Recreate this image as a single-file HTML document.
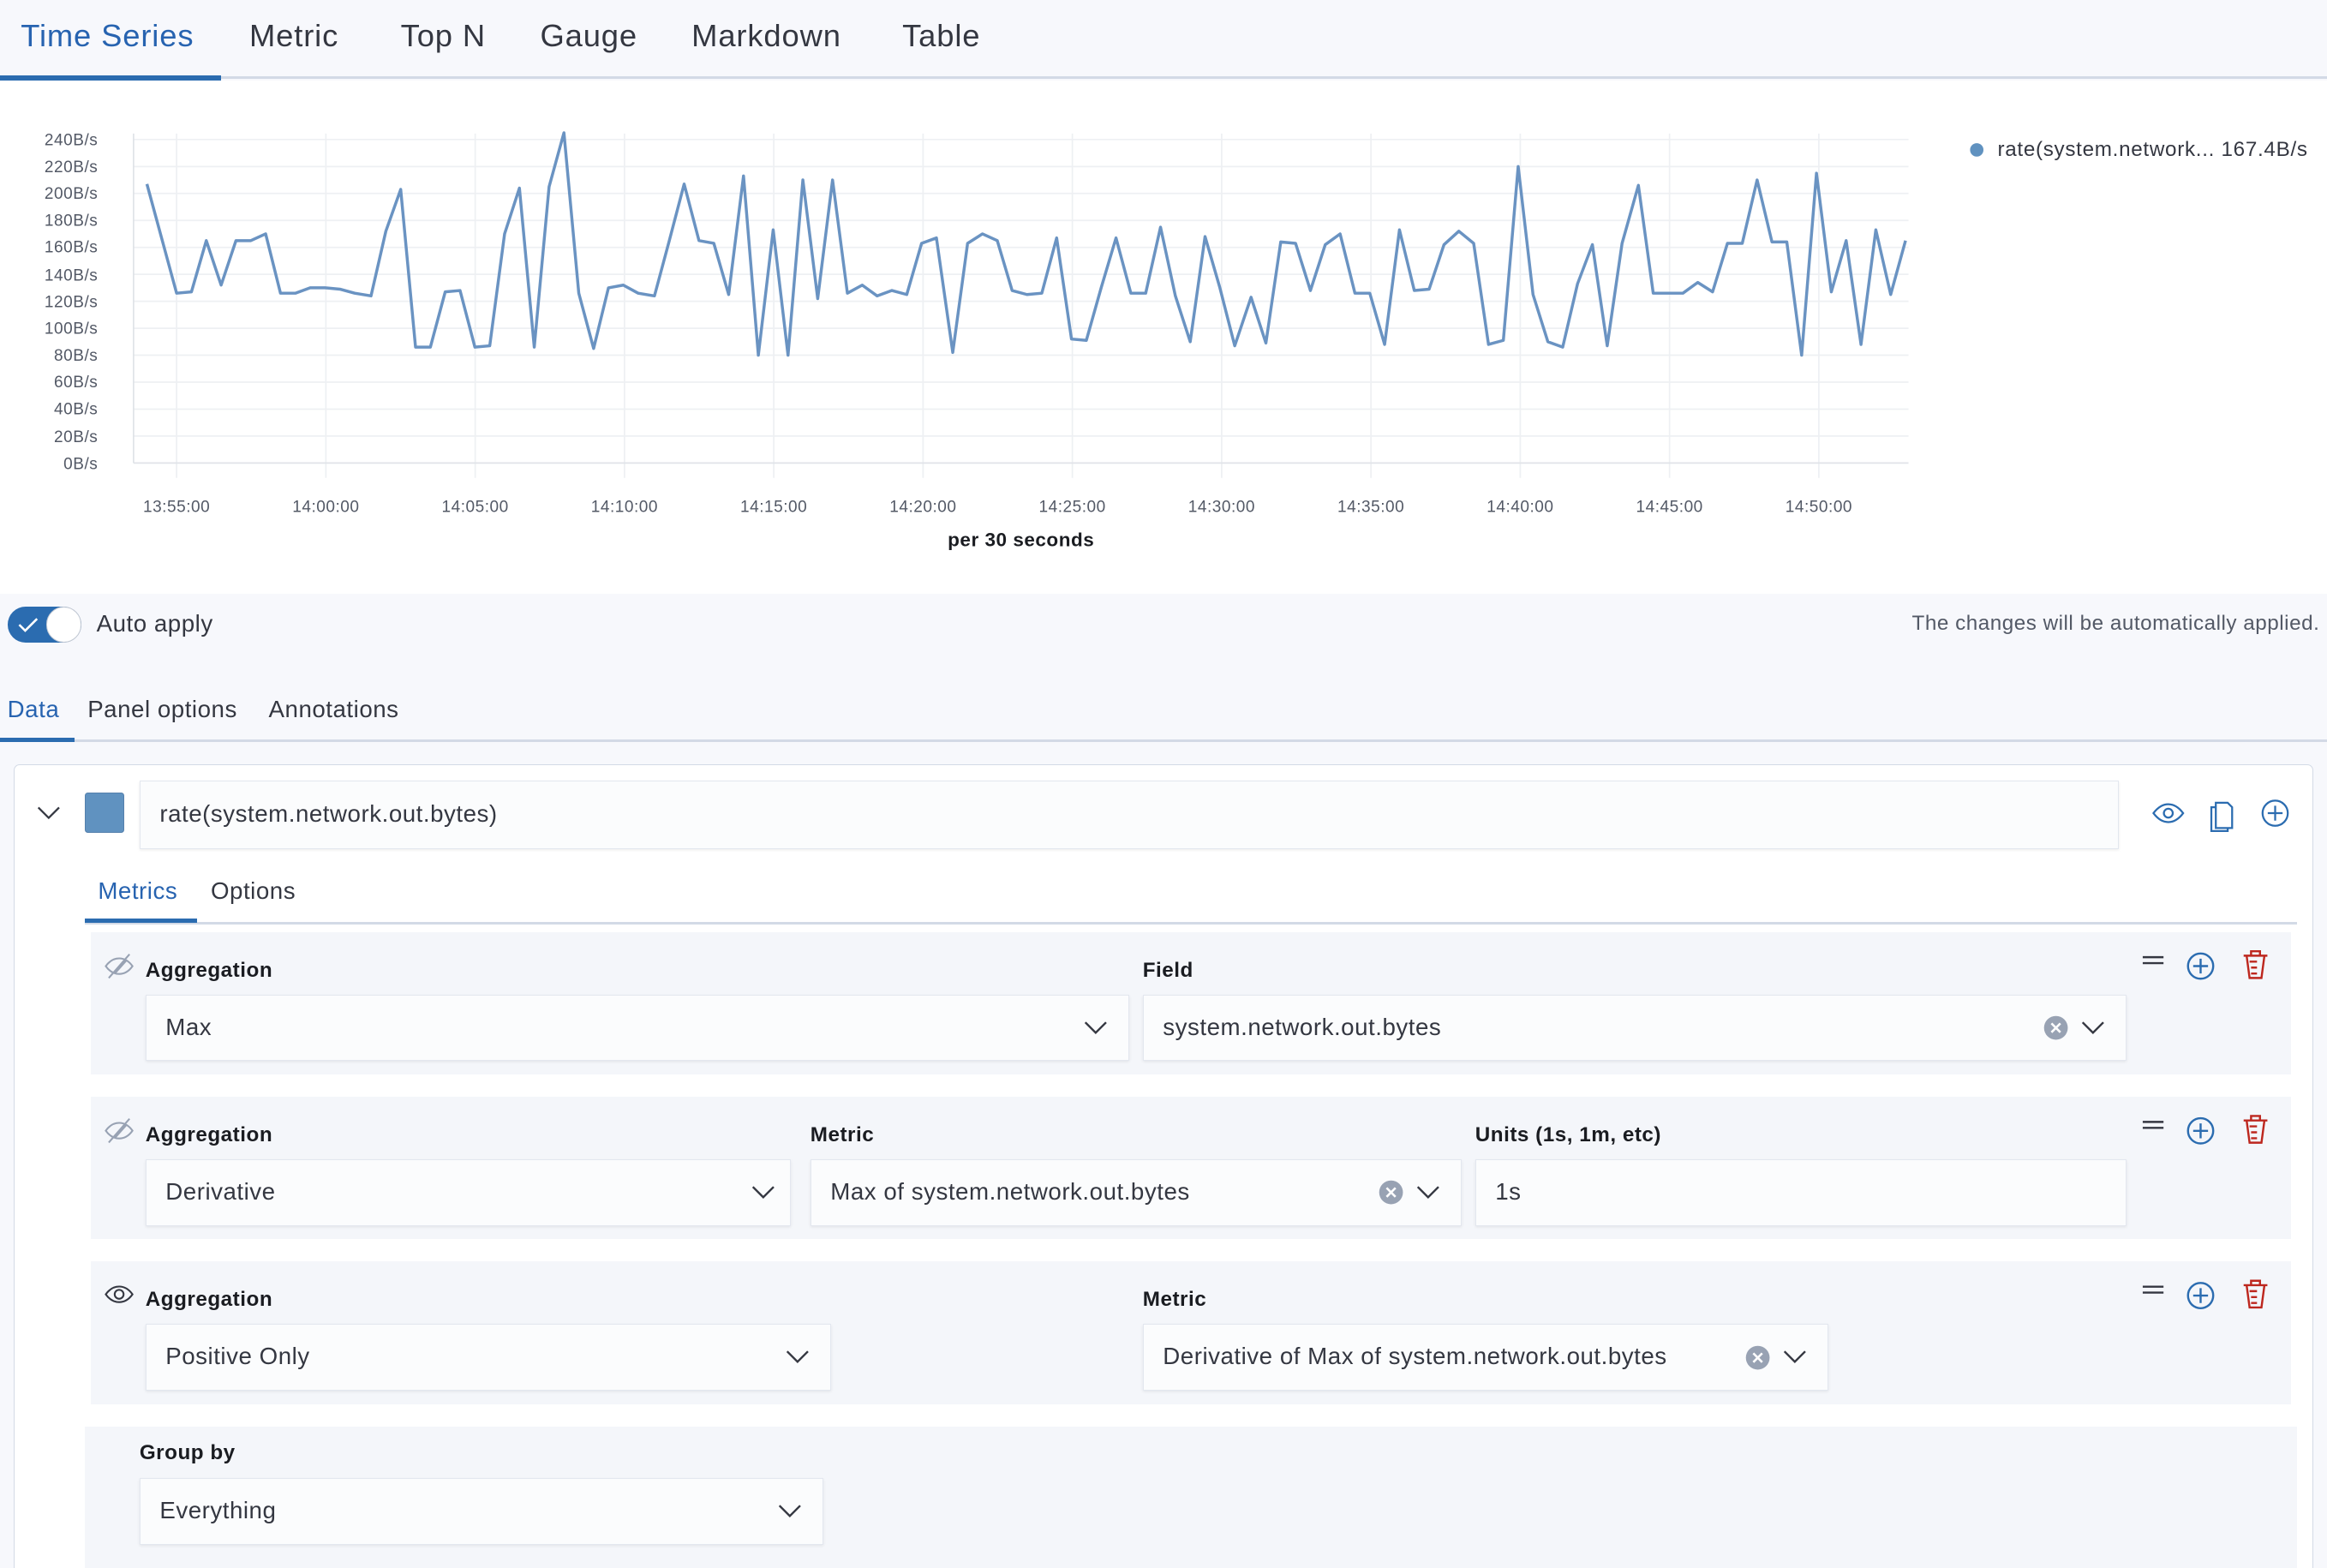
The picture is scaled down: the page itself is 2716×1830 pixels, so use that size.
<!DOCTYPE html>
<html><head><meta charset="utf-8"><style>
*{box-sizing:border-box;margin:0;padding:0}
html,body{width:2716px;height:1830px;overflow:hidden;background:#f7f8fc}
#r{zoom:1.73214;position:relative;width:1568px;height:1057px;font-family:"Liberation Sans",sans-serif;color:#343741;letter-spacing:0.3px}
.a{position:absolute}
.tab{position:absolute;top:12px;font-size:21px;color:#343741;letter-spacing:0.5px}
.sel{position:absolute;height:45px;background:#fbfcfd;border:1px solid #e3e7ef;box-shadow:0 1px 2px rgba(0,0,0,.08);font-size:16px;line-height:43px;padding-left:13px;color:#343741}
.lbl{position:absolute;font-size:14px;font-weight:bold;color:#1a1c21}
.row{position:absolute;background:#f4f6fa}
.chev{position:absolute;top:15px;width:16px;height:12px}
</style></head><body><div id="r">
<div class="a" style="left:0;top:0;width:1568px;height:53px;background:#f7f8fc;border-bottom:2px solid #d3dae6"></div>
<div class="a" style="left:0;top:51px;width:149px;height:3px;background:#2b6cb0"></div>
<div class="tab" style="left:14px;color:#2763b0">Time Series</div>
<div class="tab" style="left:168px">Metric</div>
<div class="tab" style="left:270px">Top N</div>
<div class="tab" style="left:364px">Gauge</div>
<div class="tab" style="left:466px">Markdown</div>
<div class="tab" style="left:608px">Table</div>
<div class="a" style="left:0;top:54px;width:1568px;height:346px;background:#fff"></div>
<svg class="a" style="left:0;top:0" width="1568" height="400" font-family="Liberation Sans" font-size="11" fill="#535966">
<g stroke="#eef0f3" stroke-width="1">
<line x1="90" x2="1286" y1="94" y2="94"/><line x1="90" x2="1286" y1="112.2" y2="112.2"/><line x1="90" x2="1286" y1="130.3" y2="130.3"/><line x1="90" x2="1286" y1="148.5" y2="148.5"/><line x1="90" x2="1286" y1="166.7" y2="166.7"/><line x1="90" x2="1286" y1="184.8" y2="184.8"/><line x1="90" x2="1286" y1="203" y2="203"/><line x1="90" x2="1286" y1="221.2" y2="221.2"/><line x1="90" x2="1286" y1="239.3" y2="239.3"/><line x1="90" x2="1286" y1="257.5" y2="257.5"/><line x1="90" x2="1286" y1="275.7" y2="275.7"/><line x1="90" x2="1286" y1="293.8" y2="293.8"/>
<line y1="90" y2="322" x1="119" x2="119"/><line y1="90" y2="322" x1="219.6" x2="219.6"/><line y1="90" y2="322" x1="320.2" x2="320.2"/><line y1="90" y2="322" x1="420.8" x2="420.8"/><line y1="90" y2="322" x1="521.4" x2="521.4"/><line y1="90" y2="322" x1="622" x2="622"/><line y1="90" y2="322" x1="722.6" x2="722.6"/><line y1="90" y2="322" x1="823.2" x2="823.2"/><line y1="90" y2="322" x1="923.8" x2="923.8"/><line y1="90" y2="322" x1="1024.4" x2="1024.4"/><line y1="90" y2="322" x1="1125" x2="1125"/><line y1="90" y2="322" x1="1225.6" x2="1225.6"/>
</g>
<line x1="90" x2="90" y1="90" y2="312" stroke="#e0e3e8"/><line x1="90" x2="1286" y1="312" y2="312" stroke="#e0e3e8"/>
<g text-anchor="end"><text x="66" y="98">240B/s</text><text x="66" y="116">220B/s</text><text x="66" y="134">200B/s</text><text x="66" y="152">180B/s</text><text x="66" y="170">160B/s</text><text x="66" y="189">140B/s</text><text x="66" y="207">120B/s</text><text x="66" y="225">100B/s</text><text x="66" y="243">80B/s</text><text x="66" y="261">60B/s</text><text x="66" y="279">40B/s</text><text x="66" y="298">20B/s</text><text x="66" y="316">0B/s</text></g>
<g text-anchor="middle"><text x="119" y="345">13:55:00</text><text x="219.6" y="345">14:00:00</text><text x="320.2" y="345">14:05:00</text><text x="420.8" y="345">14:10:00</text><text x="521.4" y="345">14:15:00</text><text x="622" y="345">14:20:00</text><text x="722.6" y="345">14:25:00</text><text x="823.2" y="345">14:30:00</text><text x="923.8" y="345">14:35:00</text><text x="1024.4" y="345">14:40:00</text><text x="1125" y="345">14:45:00</text><text x="1225.6" y="345">14:50:00</text>
<text x="688" y="368" font-size="13" font-weight="bold" fill="#1a1c21">per 30 seconds</text></g>
<g transform="translate(0,312) scale(1,-0.9083)"><polyline fill="none" stroke="#6a93c2" stroke-width="2" vector-effect="non-scaling-stroke" stroke-linejoin="round" points="99,207 119,126 129,127 139,165 149,132 159,165 169,165 179,170 189,126 199,126 209,130 219,130 229,129 239,126 250,124 260,172 270,203 280,86 290,86 300,127 310,128 320,86 330,87 340,170 350,204 360,86 370,205 380,245 390,126 400,85 410,130 420,132 430,126 441,124 451,165 461,207 471,165 481,163 491,125 501,213 511,80 521,173 531,80 541,210 551,122 561,210 571,126 581,132 591,124 601,128 611,125 621,163 631,167 642,82 652,163 662,170 672,165 682,128 692,125 702,126 712,167 722,92 732,91 742,130 752,167 762,126 772,126 782,175 792,124 802,90 812,168 822,130 832,87 843,123 853,89 863,164 873,163 883,128 893,162 903,170 913,126 923,126 933,88 943,173 953,128 963,129 973,162 983,172 993,163 1003,88 1013,91 1023,220 1033,125 1043,90 1053,86 1063,133 1073,162 1083,87 1093,163 1104,206 1114,126 1124,126 1134,126 1144,134 1154,127 1164,163 1174,163 1184,210 1194,164 1204,164 1214,80 1224,215 1234,127 1244,165 1254,88 1264,173 1274,125 1284,165"/></g>
<circle cx="1332" cy="101" r="4.5" fill="#6092c0"/>
<text x="1346" y="105" font-size="14" fill="#343741" letter-spacing="0.4">rate(system.network... 167.4B/s</text>
</svg>
<div class="a" style="left:5px;top:409px;width:50px;height:24px;border-radius:12px;background:#2b6cb0"></div>
<svg class="a" style="left:11px;top:414px" width="16" height="14"><path d="M2 7l4 4 8-8" fill="none" stroke="#fff" stroke-width="1.5"/></svg>
<div class="a" style="left:31px;top:409px;width:24px;height:24px;border-radius:12px;background:#fff;border:1px solid #c3c9d3"></div>
<div class="a" style="left:65px;top:411px;font-size:16px;color:#343741">Auto apply</div>
<div class="a" style="right:5px;top:412px;font-size:14px;color:#535966">The changes will be automatically applied.</div>
<div class="a" style="left:0;top:498px;width:1568px;height:2px;background:#d3dae6"></div>
<div class="a" style="left:0;top:497px;width:50px;height:3px;background:#2b6cb0"></div>
<div class="a" style="left:5px;top:469px;font-size:16px;color:#2763b0">Data</div>
<div class="a" style="left:59px;top:469px;font-size:16px">Panel options</div>
<div class="a" style="left:181px;top:469px;font-size:16px">Annotations</div>
<div class="a" style="left:9px;top:515px;width:1550px;height:560px;background:#fff;border:1px solid #d3dae6;border-radius:4px"></div>
<svg class="a" style="left:25px;top:542px" width="16" height="12"><path d="M1 2l7 7 7-7" fill="none" stroke="#343741" stroke-width="1.3"/></svg>
<div class="a" style="left:57px;top:534px;width:27px;height:27px;background:#6092c0;border:1px solid #5580ac;border-radius:2px"></div>
<div class="sel" style="left:94px;top:526px;width:1334px;height:46px;line-height:44px">rate(system.network.out.bytes)</div>
<svg class="a" style="left:1449px;top:537px" width="100" height="24" fill="none" stroke="#2b6cb0" stroke-width="1.3">
<path d="M2 11c6-8 14-8 20 0c-6 8-14 8-20 0z"/><circle cx="12" cy="11" r="3"/>
<path d="M44 4h8l3 3v14h-11z M44 7h-3v16h11v-2"/>
<circle cx="84" cy="11" r="8.5"/><path d="M84 6v10M79 11h10"/>
</svg>
<div class="a" style="left:57px;top:621px;width:1491px;height:2px;background:#d3dae6"></div>
<div class="a" style="left:57px;top:619px;width:76px;height:3px;background:#2b6cb0"></div>
<div class="a" style="left:66px;top:591px;font-size:16px;color:#2763b0">Metrics</div>
<div class="a" style="left:142px;top:591px;font-size:16px">Options</div>
<div class="row" style="left:61px;top:628px;width:1483px;height:96px"></div>
<div class="row" style="left:61px;top:739px;width:1483px;height:96px"></div>
<div class="row" style="left:61px;top:850px;width:1483px;height:96px"></div>
<div class="row" style="left:57px;top:961px;width:1491px;height:96px"></div>
<svg class="a" style="left:69px;top:642px" width="22" height="20" fill="none" stroke="#98a2b3" stroke-width="1.2"><path d="M2 9c5-7 13-7 18 0c-5 7-13 7-18 0z"/><path d="M4 17L18 1M8 14l8-9"/></svg>
<svg class="a" style="left:69px;top:753px" width="22" height="20" fill="none" stroke="#98a2b3" stroke-width="1.2"><path d="M2 9c5-7 13-7 18 0c-5 7-13 7-18 0z"/><path d="M4 17L18 1M8 14l8-9"/></svg>
<svg class="a" style="left:69px;top:863px" width="22" height="20" fill="none" stroke="#343741" stroke-width="1.2"><path d="M2 9c5-7 13-7 18 0c-5 7-13 7-18 0z"/><circle cx="11" cy="9" r="3"/></svg>
<svg class="a" style="left:1440px;top:638px" width="100" height="420" fill="none" stroke-width="1.4">
<g id="ic"><path d="M4 7h14M4 11h14" stroke="#343741"/><circle cx="43" cy="13" r="8.5" stroke="#2b6cb0"/><path d="M43 8v10M38 13h10" stroke="#2b6cb0"/><path d="M72 6h16M77 6V3h6v3M74 6l2 15h8l2-15M76 10h5M77 14h4M77 18h4" stroke="#bd271e"/></g>
<use href="#ic" y="111"/><use href="#ic" y="222"/>
</svg>
<div class="lbl" style="left:98px;top:646px">Aggregation</div>
<div class="lbl" style="left:770px;top:646px">Field</div>
<div class="sel" style="left:98px;top:670px;width:663px">Max<svg class="chev" style="right:14px" viewBox="0 0 16 12"><path d="M1 3l7 7 7-7" fill="none" stroke="#343741" stroke-width="1.4"/></svg></div>
<div class="sel" style="left:770px;top:670px;width:663px">system.network.out.bytes<svg class="a" style="right:38px;top:13px" width="18" height="18"><circle cx="9" cy="9" r="8" fill="#98a2b3"/><path d="M6 6l6 6M12 6l-6 6" stroke="#fff" stroke-width="1.5"/></svg><svg class="chev" style="right:14px" viewBox="0 0 16 12"><path d="M1 3l7 7 7-7" fill="none" stroke="#343741" stroke-width="1.4"/></svg></div>
<div class="lbl" style="left:98px;top:757px">Aggregation</div>
<div class="lbl" style="left:546px;top:757px">Metric</div>
<div class="lbl" style="left:994px;top:757px">Units (1s, 1m, etc)</div>
<div class="sel" style="left:98px;top:781px;width:435px">Derivative<svg class="chev" style="right:10px" viewBox="0 0 16 12"><path d="M1 3l7 7 7-7" fill="none" stroke="#343741" stroke-width="1.4"/></svg></div>
<div class="sel" style="left:546px;top:781px;width:439px">Max of system.network.out.bytes<svg class="a" style="right:38px;top:13px" width="18" height="18"><circle cx="9" cy="9" r="8" fill="#98a2b3"/><path d="M6 6l6 6M12 6l-6 6" stroke="#fff" stroke-width="1.5"/></svg><svg class="chev" style="right:14px" viewBox="0 0 16 12"><path d="M1 3l7 7 7-7" fill="none" stroke="#343741" stroke-width="1.4"/></svg></div>
<div class="sel" style="left:994px;top:781px;width:439px">1s</div>
<div class="lbl" style="left:98px;top:868px">Aggregation</div>
<div class="lbl" style="left:770px;top:868px">Metric</div>
<div class="sel" style="left:98px;top:892px;width:462px">Positive Only<svg class="chev" style="right:14px" viewBox="0 0 16 12"><path d="M1 3l7 7 7-7" fill="none" stroke="#343741" stroke-width="1.4"/></svg></div>
<div class="sel" style="left:770px;top:892px;width:462px">Derivative of Max of system.network.out.bytes<svg class="a" style="right:38px;top:13px" width="18" height="18"><circle cx="9" cy="9" r="8" fill="#98a2b3"/><path d="M6 6l6 6M12 6l-6 6" stroke="#fff" stroke-width="1.5"/></svg><svg class="chev" style="right:14px" viewBox="0 0 16 12"><path d="M1 3l7 7 7-7" fill="none" stroke="#343741" stroke-width="1.4"/></svg></div>
<div class="lbl" style="left:94px;top:971px">Group by</div>
<div class="sel" style="left:94px;top:996px;width:461px">Everything<svg class="chev" style="right:14px" viewBox="0 0 16 12"><path d="M1 3l7 7 7-7" fill="none" stroke="#343741" stroke-width="1.4"/></svg></div>
</div></body></html>
